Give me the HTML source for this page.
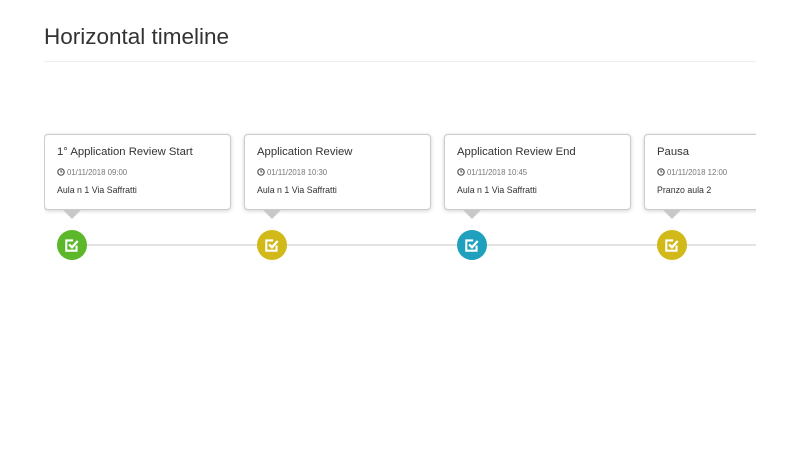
<!DOCTYPE html>
<html><head><style>
body{margin:0;width:800px;height:450px;background:#fff;font-family:"Liberation Sans",sans-serif;color:#333;overflow:hidden}
h1{position:absolute;left:44px;top:24px;margin:0;font-size:22.5px;font-weight:400;color:#333}
.hr{position:absolute;left:44px;top:61px;width:712px;height:1px;background:#eee}
.wrap{position:absolute;left:44px;top:120px;width:712px;height:160px;overflow:hidden}
.line{position:absolute;left:20px;top:124px;width:700px;height:2px;background:#e3e3e3}
.card{position:absolute;top:14px;width:185px;height:74px;border:1px solid #ccc;border-radius:4px;background:#fff;box-shadow:0 1px 4px rgba(0,0,0,.18)}
.card h3{margin:0;position:absolute;left:12px;top:11px;font-size:11.3px;font-weight:400;color:#333}
.d{position:absolute;left:12px;top:33px;font-size:7.8px;color:#777}
.d svg{vertical-align:-1px;margin-right:2px}
.p{position:absolute;left:12px;top:50px;font-size:8.8px;color:#333}
.tri{position:absolute;top:90px;width:0;height:0;border-left:9px solid transparent;border-right:9px solid transparent;border-top:9px solid #c8c8c8}
.c{position:absolute;top:110px;width:30px;height:30px;border-radius:50%}
.c svg{position:absolute;left:7px;top:7px}
</style></head><body>
<h1>Horizontal timeline</h1><div class="hr"></div>
<div class="wrap"><div class="line"></div>
<div class="card" style="left:0"><h3>1° Application Review Start</h3><div class="d"><svg width="8" height="8" viewBox="0 0 8 8"><circle cx="4" cy="4" r="3.2" fill="none" stroke="#555" stroke-width="1.2"/><path d="M4 2v2h1.5" stroke="#555" fill="none"/></svg>01/11/2018 09:00</div><div class="p">Aula n 1 Via Saffratti</div></div>
<div class="card" style="left:200px"><h3>Application Review</h3><div class="d"><svg width="8" height="8" viewBox="0 0 8 8"><circle cx="4" cy="4" r="3.2" fill="none" stroke="#555" stroke-width="1.2"/><path d="M4 2v2h1.5" stroke="#555" fill="none"/></svg>01/11/2018 10:30</div><div class="p">Aula n 1 Via Saffratti</div></div>
<div class="card" style="left:400px"><h3>Application Review End</h3><div class="d"><svg width="8" height="8" viewBox="0 0 8 8"><circle cx="4" cy="4" r="3.2" fill="none" stroke="#555" stroke-width="1.2"/><path d="M4 2v2h1.5" stroke="#555" fill="none"/></svg>01/11/2018 10:45</div><div class="p">Aula n 1 Via Saffratti</div></div>
<div class="card" style="left:600px"><h3>Pausa</h3><div class="d"><svg width="8" height="8" viewBox="0 0 8 8"><circle cx="4" cy="4" r="3.2" fill="none" stroke="#555" stroke-width="1.2"/><path d="M4 2v2h1.5" stroke="#555" fill="none"/></svg>01/11/2018 12:00</div><div class="p">Pranzo aula 2</div></div>
<div class="tri" style="left:19px"></div><div class="tri" style="left:219px"></div><div class="tri" style="left:419px"></div><div class="tri" style="left:619px"></div>
<div class="c" style="left:13px;background:#5cb82a"><svg width="16" height="16" viewBox="0 0 14 14"><path d="M11 7.5V12H2V3H8" fill="none" stroke="#fff" stroke-width="1.8"/><path d="M4.5 6.5l2.5 2.5 5-5.5" fill="none" stroke="#fff" stroke-width="2"/></svg></div>
<div class="c" style="left:213px;background:#d2b91a"><svg width="16" height="16" viewBox="0 0 14 14"><path d="M11 7.5V12H2V3H8" fill="none" stroke="#fff" stroke-width="1.8"/><path d="M4.5 6.5l2.5 2.5 5-5.5" fill="none" stroke="#fff" stroke-width="2"/></svg></div>
<div class="c" style="left:413px;background:#1fa1be"><svg width="16" height="16" viewBox="0 0 14 14"><path d="M11 7.5V12H2V3H8" fill="none" stroke="#fff" stroke-width="1.8"/><path d="M4.5 6.5l2.5 2.5 5-5.5" fill="none" stroke="#fff" stroke-width="2"/></svg></div>
<div class="c" style="left:613px;background:#d2b91a"><svg width="16" height="16" viewBox="0 0 14 14"><path d="M11 7.5V12H2V3H8" fill="none" stroke="#fff" stroke-width="1.8"/><path d="M4.5 6.5l2.5 2.5 5-5.5" fill="none" stroke="#fff" stroke-width="2"/></svg></div>
</div>
</body></html>
